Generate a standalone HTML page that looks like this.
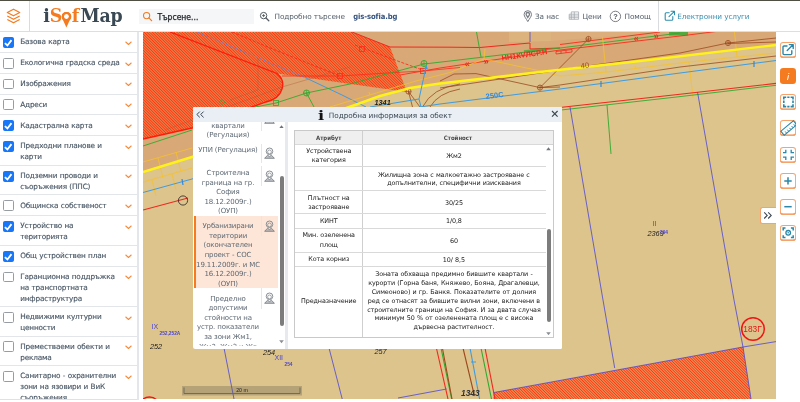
<!DOCTYPE html>
<html lang="bg">
<head>
<meta charset="utf-8">
<title>iSofMap</title>
<style>
*{box-sizing:border-box;margin:0;padding:0}
html,body{width:800px;height:402px;overflow:hidden;background:#fff}
body{position:relative;font-family:"DejaVu Sans","Liberation Sans",sans-serif;font-size:7.5px;color:#4b5763}
#wrap{position:absolute;left:0;top:0;width:800px;height:402px;will-change:transform}
.abs{position:absolute}
#topline{left:0;top:-1px;width:800px;height:2px;background:#4f5043}
#header{left:0;top:1px;width:800px;height:31px;background:#fff;border-bottom:1px solid #dcdfe2}
#hdiv1{left:29px;top:1px;width:1px;height:30px;background:#d9dcdf}
#hdiv2{left:658px;top:1px;width:1px;height:30px;background:#d9dcdf}
.nav{top:10.8px;height:11px;line-height:11px;white-space:nowrap;color:#55606b;font-size:7.3px;letter-spacing:-.1px}
#gis{font-family:"DejaVu Sans Condensed","DejaVu Sans",sans-serif;font-weight:bold;color:#34527f;font-size:7.6px;letter-spacing:-.1px}
#eserv{color:#3a8fb0}
#stext{left:157.5px;top:11px;-webkit-text-stroke:.25px #1f2328;height:12px;line-height:12px;font-family:"DejaVu Sans Condensed","DejaVu Sans",sans-serif;font-size:8.5px;color:#1f2328;white-space:nowrap}
#search{left:139px;top:8.6px;width:115px;height:15.2px;background:#f5f6f7}
#sidebar{left:0;top:32px;width:137px;height:368px;background:#fff;overflow:hidden;border-bottom:1px solid #dfe2e5}
.row{position:absolute;left:0;width:136.5px;border-bottom:1px solid #e3e6e9}
.row .cb{position:absolute;left:3.1px;top:4.8px;width:10.9px;height:10.9px;border:1px solid #989da3;border-radius:1.6px;background:#fff}
.row .cb.on{background:#1877f8;border-color:#1877f8}
.row .cb.on svg{position:absolute;left:-1px;top:-1px;width:10.9px;height:10.9px}
.row .t{position:absolute;left:20.2px;top:4.2px;width:104px;line-height:11px;font-size:7.3px;letter-spacing:-.17px;word-spacing:.3px;color:#4a5866;-webkit-text-stroke:.14px #4a5866;white-space:nowrap}
.row .ch{position:absolute;left:124.5px;top:8.6px;width:7px;height:4.5px}
#sbstrip{left:137px;top:32px;width:2px;height:368px;background:#e3e6ea}
#map{left:143px;top:32px;width:633px;height:367px;overflow:hidden}
#right{left:776px;top:32px;width:24px;height:370px;background:#fff}

#popup{left:192.5px;top:107px;width:369.5px;height:241.5px;background:#fff;overflow:hidden;border-radius:1.5px 1.5px 1.5px 2.5px}
#phead{position:absolute;left:0;top:0;width:100%;height:15px;background:#e9eff4}
#pti{position:absolute;left:124.8px;top:2px;width:8px;height:13px;line-height:13px;font-family:"DejaVu Serif","Liberation Serif",serif;font-weight:bold;font-size:13.5px;transform:scaleX(1.2);color:#111;text-align:center}
#ptitle{position:absolute;left:136.3px;top:3.3px;height:11px;line-height:11px;font-size:7.3px;letter-spacing:-.04px;color:#3a4652;white-space:nowrap}
#plist{position:absolute;left:0;top:15px;width:92.5px;height:226px;overflow:hidden;margin-top:-15px;padding-top:15px}
#plist{top:0;margin-top:0;padding-top:0;height:238.8px;clip-path:inset(15px 0 0 0)}
#psel{position:absolute;left:1px;width:84px;background:#fde6d8;border-left:2.2px solid #f47b20}
.li{position:absolute;left:2px;width:67px;text-align:center;line-height:9.55px;font-size:7px;letter-spacing:-.12px;color:#5d6873;white-space:nowrap}
.isep{position:absolute;left:68.3px;width:1px;background:#e4e7ea}
.pi{position:absolute;left:71.5px;width:11px;height:12px}
.sbt{position:absolute;width:4px;border-radius:2px;background:#7c7c7c}
#psplit{position:absolute;left:92.8px;top:15px;width:2.6px;height:227px;background:#e6eaee}
#ptable{position:absolute;border:1px solid #c9c9c9;overflow:hidden;font-size:6.4px;color:#1a1a1a}
.th{position:absolute;top:0;height:13.8px;line-height:14.2px;background:#efefef;text-align:center;font-weight:bold;font-family:"DejaVu Sans Condensed","DejaVu Sans",sans-serif;font-size:6px;color:#4a4a4a;border-bottom:1px solid #d2d2d2}
.vline{position:absolute;top:0;width:1px;height:100%;background:#cfcfcf}
.hline{position:absolute;left:0;width:250.8px;height:1px;background:#d9d9d9}
.ta,.tv{position:absolute;text-align:center;line-height:8.82px;white-space:nowrap;letter-spacing:-.1px;word-spacing:.3px}
.ta{left:0;line-height:9.45px}

.rb{position:absolute;left:780px;width:16px;height:16px;background:#fff;border-radius:3.2px;box-shadow:inset 0 0 0 .9px #f6a26a,inset 0 -1.5px 0 0 #f48a3c;overflow:visible}
.rb.on{background:#f47b20;box-shadow:none}
.rb svg{position:absolute;left:0;top:0}
#rtab{left:759.5px;top:207.3px;width:16.5px;height:16.8px;background:#fff;border:1px solid #f6a26a;border-right:none;border-radius:2.5px 0 0 2.5px;overflow:hidden}
#rtab svg{position:absolute;left:-.5px;top:-1px}
</style>
</head>

<body>
<div id="wrap">
<div id="topline" class="abs"></div>
<div id="header" class="abs"></div>
<div id="hdiv1" class="abs"></div>
<div id="hdiv2" class="abs"></div>
<svg class="abs" style="left:6px;top:8px" width="16" height="16" viewBox="0 0 16 16"><g fill="none" stroke="#f47b20" stroke-width="1.25" stroke-linejoin="round"><path d="M7.5 1.2 L13.7 4.5 L7.5 7.8 L1.3 4.5 Z"/><path d="M1.3 8 L7.5 11.3 L13.7 8"/><path d="M1.3 11.500 L7.5 14.800 L13.7 11.500"/></g></svg>
<svg class="abs" style="left:40px;top:2px" width="84" height="29" viewBox="0 0 84 29"><g font-family="'DejaVu Serif Condensed','DejaVu Serif',serif" font-weight="bold" font-size="19.3"><text x="3.2" y="20.1" fill="#3a4854">i</text><text x="9.7" y="20.1" fill="#f47b20">S</text><text x="21.1" y="19.1" font-size="16" font-family="'DejaVu Sans',sans-serif" fill="#f47b20">o</text><circle cx="26.4" cy="14.6" r="3.5" fill="none" stroke="#f47b20" stroke-width="2.2"/><path d="M22.3 16.6 L30.5 16.6 L26.4 25.6 Z" fill="#f47b20"/><circle cx="26.4" cy="14.6" r="2.4" fill="#fff"/><text x="31.7" y="20.1" fill="#f47b20">f</text><text x="40.4" y="20.1" fill="#3a4854" letter-spacing="-0.2">Map</text></g></svg>
<div id="search" class="abs"></div>
<svg class="abs" style="left:142px;top:11px" width="11" height="11" viewBox="0 0 11 11"><circle cx="4.6" cy="4.6" r="3.1" fill="none" stroke="#f47b20" stroke-width="1.1"/><path d="M6.9 6.9 L9.6 9.6" stroke="#f47b20" stroke-width="1.3" stroke-linecap="round"/></svg>
<div class="abs" id="stext">Търсене...</div>
<svg class="abs" style="left:259px;top:11px" width="11" height="11" viewBox="0 0 11 11"><circle cx="4.6" cy="4.6" r="3.2" fill="none" stroke="#555b62" stroke-width="1"/><path d="M7 7 L9.8 9.8" stroke="#555b62" stroke-width="1.3" stroke-linecap="round"/><path d="M3.1 4.6 H6.1 M4.6 3.1 V6.1" stroke="#555b62" stroke-width=".9"/></svg>
<div class="abs nav" style="left:274.5px">Подробно търсене</div>
<div class="abs nav" id="gis" style="left:353.3px">gis-sofia.bg</div>
<svg class="abs" style="left:523px;top:10px" width="10" height="13" viewBox="0 0 10 13"><path d="M4.8 11.6 C3.2 8.6 1.1 6.6 1.1 4.4 A3.7 3.7 0 0 1 8.5 4.4 C8.5 6.6 6.4 8.6 4.8 11.6 Z" fill="none" stroke="#777d84" stroke-width="1"/><path d="M4.8 7.4 C4 6 3.1 5.2 3.1 4.2 A1.7 1.7 0 0 1 6.5 4.2 C6.5 5.2 5.6 6 4.8 7.4 Z" fill="none" stroke="#777d84" stroke-width="1.300"/></svg>
<div class="abs nav" style="left:535px">За нас</div>
<svg class="abs" style="left:568px;top:11px" width="12" height="10" viewBox="0 0 12 10"><g fill="none" stroke="#a3a8ae" stroke-width=".8"><path d="M3.3 .9 H10.6 V8.3 H1.2 V3.2 H3.3 Z"/><path d="M3.3 3.2 V8.3 M3.3 3.2 H10.6 M1.2 5 H10.6 M1.2 6.7 H10.6 M6.3 .9 V8.3"/></g></svg>
<div class="abs nav" style="left:582.4px">Цени</div>
<svg class="abs" style="left:609px;top:9.600px" width="13" height="13" viewBox="0 0 13 13"><circle cx="6.4" cy="6.4" r="5.2" fill="none" stroke="#5a6066" stroke-width=".8"/><text x="6.4" y="9" text-anchor="middle" font-family="'Liberation Sans',sans-serif" font-size="7.4" font-weight="bold" fill="#50565d">?</text></svg>
<div class="abs nav" style="left:624.6px">Помощ</div>
<svg class="abs" style="left:664px;top:10px" width="12" height="12" viewBox="0 0 12 12"><g fill="none" stroke="#2f8fae" stroke-width="1.1" stroke-linejoin="round" stroke-linecap="round"><path d="M5.2 2.8 H2.2 Q1.2 2.8 1.2 3.8 V9.2 Q1.2 10.2 2.2 10.2 H7.8 Q8.8 10.2 8.8 9.2 V6.6"/><path d="M5 6.6 L10.4 1.3 M7 1.2 H10.5 V4.7"/></g></svg>
<div class="abs nav" id="eserv" style="left:677.2px">Електронни услуги</div>

<div id="sidebar" class="abs">
<div class="row" style="top:0.10px;height:20.83px"><span class="cb on"><svg viewBox="0 0 10.9 10.9"><path d="M1.9 6.2 L4.4 8.5 L8.5 3.1" fill="none" stroke="#fff" stroke-width="1.8"/></svg></span><span class="t">Базова карта</span><svg class="ch" viewBox="0 0 7 4.5"><path d="M0.8 1 L3.5 3.5 L6.2 1" fill="none" stroke="#f58a3c" stroke-width="1.05" stroke-linecap="round" stroke-linejoin="round"/></svg></div>
<div class="row" style="top:20.93px;height:20.83px"><span class="cb"></span><span class="t">Екологична градска среда</span><svg class="ch" viewBox="0 0 7 4.5"><path d="M0.8 1 L3.5 3.5 L6.2 1" fill="none" stroke="#f58a3c" stroke-width="1.05" stroke-linecap="round" stroke-linejoin="round"/></svg></div>
<div class="row" style="top:41.76px;height:20.83px"><span class="cb"></span><span class="t">Изображения</span><svg class="ch" viewBox="0 0 7 4.5"><path d="M0.8 1 L3.5 3.5 L6.2 1" fill="none" stroke="#f58a3c" stroke-width="1.05" stroke-linecap="round" stroke-linejoin="round"/></svg></div>
<div class="row" style="top:62.59px;height:20.83px"><span class="cb"></span><span class="t">Адреси</span><svg class="ch" viewBox="0 0 7 4.5"><path d="M0.8 1 L3.5 3.5 L6.2 1" fill="none" stroke="#f58a3c" stroke-width="1.05" stroke-linecap="round" stroke-linejoin="round"/></svg></div>
<div class="row" style="top:83.42px;height:20.83px"><span class="cb on"><svg viewBox="0 0 10.9 10.9"><path d="M1.9 6.2 L4.4 8.5 L8.5 3.1" fill="none" stroke="#fff" stroke-width="1.8"/></svg></span><span class="t">Кадастрална карта</span><svg class="ch" viewBox="0 0 7 4.5"><path d="M0.8 1 L3.5 3.5 L6.2 1" fill="none" stroke="#f58a3c" stroke-width="1.05" stroke-linecap="round" stroke-linejoin="round"/></svg></div>
<div class="row" style="top:104.25px;height:29.60px"><span class="cb on"><svg viewBox="0 0 10.9 10.9"><path d="M1.9 6.2 L4.4 8.5 L8.5 3.1" fill="none" stroke="#fff" stroke-width="1.8"/></svg></span><span class="t">Предходни планове и<br>карти</span><svg class="ch" viewBox="0 0 7 4.5"><path d="M0.8 1 L3.5 3.5 L6.2 1" fill="none" stroke="#f58a3c" stroke-width="1.05" stroke-linecap="round" stroke-linejoin="round"/></svg></div>
<div class="row" style="top:133.85px;height:29.60px"><span class="cb on"><svg viewBox="0 0 10.9 10.9"><path d="M1.9 6.2 L4.4 8.5 L8.5 3.1" fill="none" stroke="#fff" stroke-width="1.8"/></svg></span><span class="t">Подземни проводи и<br>съоръжения (ППС)</span><svg class="ch" viewBox="0 0 7 4.5"><path d="M0.8 1 L3.5 3.5 L6.2 1" fill="none" stroke="#f58a3c" stroke-width="1.05" stroke-linecap="round" stroke-linejoin="round"/></svg></div>
<div class="row" style="top:163.45px;height:20.83px"><span class="cb"></span><span class="t">Общинска собственост</span><svg class="ch" viewBox="0 0 7 4.5"><path d="M0.8 1 L3.5 3.5 L6.2 1" fill="none" stroke="#f58a3c" stroke-width="1.05" stroke-linecap="round" stroke-linejoin="round"/></svg></div>
<div class="row" style="top:184.28px;height:29.60px"><span class="cb on"><svg viewBox="0 0 10.9 10.9"><path d="M1.9 6.2 L4.4 8.5 L8.5 3.1" fill="none" stroke="#fff" stroke-width="1.8"/></svg></span><span class="t">Устройство на<br>територията</span><svg class="ch" viewBox="0 0 7 4.5"><path d="M0.8 1 L3.5 3.5 L6.2 1" fill="none" stroke="#f58a3c" stroke-width="1.05" stroke-linecap="round" stroke-linejoin="round"/></svg></div>
<div class="row" style="top:213.88px;height:20.83px"><span class="cb on"><svg viewBox="0 0 10.9 10.9"><path d="M1.9 6.2 L4.4 8.5 L8.5 3.1" fill="none" stroke="#fff" stroke-width="1.8"/></svg></span><span class="t">Общ устройствен план</span><svg class="ch" viewBox="0 0 7 4.5"><path d="M0.8 1 L3.5 3.5 L6.2 1" fill="none" stroke="#f58a3c" stroke-width="1.05" stroke-linecap="round" stroke-linejoin="round"/></svg></div>
<div class="row" style="top:234.71px;height:40.30px"><span class="cb"></span><span class="t">Гаранционна поддръжка<br>на транспортната<br>инфраструктура</span><svg class="ch" viewBox="0 0 7 4.5"><path d="M0.8 1 L3.5 3.5 L6.2 1" fill="none" stroke="#f58a3c" stroke-width="1.05" stroke-linecap="round" stroke-linejoin="round"/></svg></div>
<div class="row" style="top:275.01px;height:29.60px"><span class="cb"></span><span class="t">Недвижими културни<br>ценности</span><svg class="ch" viewBox="0 0 7 4.5"><path d="M0.8 1 L3.5 3.5 L6.2 1" fill="none" stroke="#f58a3c" stroke-width="1.05" stroke-linecap="round" stroke-linejoin="round"/></svg></div>
<div class="row" style="top:304.61px;height:29.60px"><span class="cb"></span><span class="t">Преместваеми обекти и<br>реклама</span><svg class="ch" viewBox="0 0 7 4.5"><path d="M0.8 1 L3.5 3.5 L6.2 1" fill="none" stroke="#f58a3c" stroke-width="1.05" stroke-linecap="round" stroke-linejoin="round"/></svg></div>
<div class="row" style="top:334.21px;height:40.30px"><span class="cb"></span><span class="t">Санитарно - охранителни<br>зони на язовири и ВиК<br>съоръжения</span><svg class="ch" viewBox="0 0 7 4.5"><path d="M0.8 1 L3.5 3.5 L6.2 1" fill="none" stroke="#f58a3c" stroke-width="1.05" stroke-linecap="round" stroke-linejoin="round"/></svg></div>
</div>
<div id="sbstrip" class="abs"></div>
<svg id="map" class="abs" width="633" height="367" viewBox="143 32 633 367">
<defs>
<clipPath id="c1"><path d="M143 32 H352 L390 47 L407 92 L277 73.5 Q285 80 282 89 Q279 99 266 102 L192 128 L143 139 Z"/></clipPath><clipPath id="c2"><path d="M493.5 392.6 L743 347 L751 399 H493.5 Z"/></clipPath>
</defs>
<rect x="143" y="32" width="633" height="367" fill="#ddc38c"/>
<!-- road band above the yellow line -->
<path d="M143 32 H776 V45 L640 61 L540 72 L440 83.500 L410 88 L380 96 L355 105 L300 124 L192 157 L143 172 Z" fill="#d9a877"/>
<!-- light blocks at top -->
<path d="M509 32 H551 V41 L509 42 Z" fill="#dcb37d"/>
<path d="M551 32 H640 V34 L551 41 Z" fill="#dbae7b"/>
<!-- hatched zones -->
<path clip-path="url(#c1)" d="M35.00 32l108 108M36.58 32l108 108M38.16 32l108 108M39.74 32l108 108M41.32 32l108 108M42.90 32l108 108M44.48 32l108 108M46.06 32l108 108M47.64 32l108 108M49.22 32l108 108M50.80 32l108 108M52.38 32l108 108M53.96 32l108 108M55.54 32l108 108M57.12 32l108 108M58.70 32l108 108M60.28 32l108 108M61.86 32l108 108M63.44 32l108 108M65.02 32l108 108M66.60 32l108 108M68.18 32l108 108M69.76 32l108 108M71.34 32l108 108M72.92 32l108 108M74.50 32l108 108M76.08 32l108 108M77.66 32l108 108M79.24 32l108 108M80.82 32l108 108M82.40 32l108 108M83.98 32l108 108M85.56 32l108 108M87.14 32l108 108M88.72 32l108 108M90.30 32l108 108M91.88 32l108 108M93.46 32l108 108M95.04 32l108 108M96.62 32l108 108M98.20 32l108 108M99.78 32l108 108M101.36 32l108 108M102.94 32l108 108M104.52 32l108 108M106.10 32l108 108M107.68 32l108 108M109.26 32l108 108M110.84 32l108 108M112.42 32l108 108M114.00 32l108 108M115.58 32l108 108M117.16 32l108 108M118.74 32l108 108M120.32 32l108 108M121.90 32l108 108M123.48 32l108 108M125.06 32l108 108M126.64 32l108 108M128.22 32l108 108M129.80 32l108 108M131.38 32l108 108M132.96 32l108 108M134.54 32l108 108M136.12 32l108 108M137.70 32l108 108M139.28 32l108 108M140.86 32l108 108M142.44 32l108 108M144.02 32l108 108M145.60 32l108 108M147.18 32l108 108M148.76 32l108 108M150.34 32l108 108M151.92 32l108 108M153.50 32l108 108M155.08 32l108 108M156.66 32l108 108M158.24 32l108 108M159.82 32l108 108M161.40 32l108 108M162.98 32l108 108M164.56 32l108 108M166.14 32l108 108M167.72 32l108 108M169.30 32l108 108M170.88 32l108 108M172.46 32l108 108M174.04 32l108 108M175.62 32l108 108M177.20 32l108 108M178.78 32l108 108M180.36 32l108 108M181.94 32l108 108M183.52 32l108 108M185.10 32l108 108M186.68 32l108 108M188.26 32l108 108M189.84 32l108 108M191.42 32l108 108M193.00 32l108 108M194.58 32l108 108M196.16 32l108 108M197.74 32l108 108M199.32 32l108 108M200.90 32l108 108M202.48 32l108 108M204.06 32l108 108M205.64 32l108 108M207.22 32l108 108M208.80 32l108 108M210.38 32l108 108M211.96 32l108 108M213.54 32l108 108M215.12 32l108 108M216.70 32l108 108M218.28 32l108 108M219.86 32l108 108M221.44 32l108 108M223.02 32l108 108M224.60 32l108 108M226.18 32l108 108M227.76 32l108 108M229.34 32l108 108M230.92 32l108 108M232.50 32l108 108M234.08 32l108 108M235.66 32l108 108M237.24 32l108 108M238.82 32l108 108M240.40 32l108 108M241.98 32l108 108M243.56 32l108 108M245.14 32l108 108M246.72 32l108 108M248.30 32l108 108M249.88 32l108 108M251.46 32l108 108M253.04 32l108 108M254.62 32l108 108M256.20 32l108 108M257.78 32l108 108M259.36 32l108 108M260.94 32l108 108M262.52 32l108 108M264.10 32l108 108M265.68 32l108 108M267.26 32l108 108M268.84 32l108 108M270.42 32l108 108M272.00 32l108 108M273.58 32l108 108M275.16 32l108 108M276.74 32l108 108M278.32 32l108 108M279.90 32l108 108M281.48 32l108 108M283.06 32l108 108M284.64 32l108 108M286.22 32l108 108M287.80 32l108 108M289.38 32l108 108M290.96 32l108 108M292.54 32l108 108M294.12 32l108 108M295.70 32l108 108M297.28 32l108 108M298.86 32l108 108M300.44 32l108 108M302.02 32l108 108M303.60 32l108 108M305.18 32l108 108M306.76 32l108 108M308.34 32l108 108M309.92 32l108 108M311.50 32l108 108M313.08 32l108 108M314.66 32l108 108M316.24 32l108 108M317.82 32l108 108M319.40 32l108 108M320.98 32l108 108M322.56 32l108 108M324.14 32l108 108M325.72 32l108 108M327.30 32l108 108M328.88 32l108 108M330.46 32l108 108M332.04 32l108 108M333.62 32l108 108M335.20 32l108 108M336.78 32l108 108M338.36 32l108 108M339.94 32l108 108M341.52 32l108 108M343.10 32l108 108M344.68 32l108 108M346.26 32l108 108M347.84 32l108 108M349.42 32l108 108M351.00 32l108 108M352.58 32l108 108M354.16 32l108 108M355.74 32l108 108M357.32 32l108 108M358.90 32l108 108M360.48 32l108 108M362.06 32l108 108M363.64 32l108 108M365.22 32l108 108M366.80 32l108 108M368.38 32l108 108M369.96 32l108 108M371.54 32l108 108M373.12 32l108 108M374.70 32l108 108M376.28 32l108 108M377.86 32l108 108M379.44 32l108 108M381.02 32l108 108M382.60 32l108 108M384.18 32l108 108M385.76 32l108 108M387.34 32l108 108M388.92 32l108 108M390.50 32l108 108M392.08 32l108 108M393.66 32l108 108M395.24 32l108 108M396.82 32l108 108M398.40 32l108 108M399.98 32l108 108M401.56 32l108 108M403.14 32l108 108M404.72 32l108 108M406.30 32l108 108M407.88 32l108 108" fill="none" stroke="#ff3608" stroke-width="1"/>
<path clip-path="url(#c2)" d="M439.00 346l54 54M440.58 346l54 54M442.16 346l54 54M443.74 346l54 54M445.32 346l54 54M446.90 346l54 54M448.48 346l54 54M450.06 346l54 54M451.64 346l54 54M453.22 346l54 54M454.80 346l54 54M456.38 346l54 54M457.96 346l54 54M459.54 346l54 54M461.12 346l54 54M462.70 346l54 54M464.28 346l54 54M465.86 346l54 54M467.44 346l54 54M469.02 346l54 54M470.60 346l54 54M472.18 346l54 54M473.76 346l54 54M475.34 346l54 54M476.92 346l54 54M478.50 346l54 54M480.08 346l54 54M481.66 346l54 54M483.24 346l54 54M484.82 346l54 54M486.40 346l54 54M487.98 346l54 54M489.56 346l54 54M491.14 346l54 54M492.72 346l54 54M494.30 346l54 54M495.88 346l54 54M497.46 346l54 54M499.04 346l54 54M500.62 346l54 54M502.20 346l54 54M503.78 346l54 54M505.36 346l54 54M506.94 346l54 54M508.52 346l54 54M510.10 346l54 54M511.68 346l54 54M513.26 346l54 54M514.84 346l54 54M516.42 346l54 54M518.00 346l54 54M519.58 346l54 54M521.16 346l54 54M522.74 346l54 54M524.32 346l54 54M525.90 346l54 54M527.48 346l54 54M529.06 346l54 54M530.64 346l54 54M532.22 346l54 54M533.80 346l54 54M535.38 346l54 54M536.96 346l54 54M538.54 346l54 54M540.12 346l54 54M541.70 346l54 54M543.28 346l54 54M544.86 346l54 54M546.44 346l54 54M548.02 346l54 54M549.60 346l54 54M551.18 346l54 54M552.76 346l54 54M554.34 346l54 54M555.92 346l54 54M557.50 346l54 54M559.08 346l54 54M560.66 346l54 54M562.24 346l54 54M563.82 346l54 54M565.40 346l54 54M566.98 346l54 54M568.56 346l54 54M570.14 346l54 54M571.72 346l54 54M573.30 346l54 54M574.88 346l54 54M576.46 346l54 54M578.04 346l54 54M579.62 346l54 54M581.20 346l54 54M582.78 346l54 54M584.36 346l54 54M585.94 346l54 54M587.52 346l54 54M589.10 346l54 54M590.68 346l54 54M592.26 346l54 54M593.84 346l54 54M595.42 346l54 54M597.00 346l54 54M598.58 346l54 54M600.16 346l54 54M601.74 346l54 54M603.32 346l54 54M604.90 346l54 54M606.48 346l54 54M608.06 346l54 54M609.64 346l54 54M611.22 346l54 54M612.80 346l54 54M614.38 346l54 54M615.96 346l54 54M617.54 346l54 54M619.12 346l54 54M620.70 346l54 54M622.28 346l54 54M623.86 346l54 54M625.44 346l54 54M627.02 346l54 54M628.60 346l54 54M630.18 346l54 54M631.76 346l54 54M633.34 346l54 54M634.92 346l54 54M636.50 346l54 54M638.08 346l54 54M639.66 346l54 54M641.24 346l54 54M642.82 346l54 54M644.40 346l54 54M645.98 346l54 54M647.56 346l54 54M649.14 346l54 54M650.72 346l54 54M652.30 346l54 54M653.88 346l54 54M655.46 346l54 54M657.04 346l54 54M658.62 346l54 54M660.20 346l54 54M661.78 346l54 54M663.36 346l54 54M664.94 346l54 54M666.52 346l54 54M668.10 346l54 54M669.68 346l54 54M671.26 346l54 54M672.84 346l54 54M674.42 346l54 54M676.00 346l54 54M677.58 346l54 54M679.16 346l54 54M680.74 346l54 54M682.32 346l54 54M683.90 346l54 54M685.48 346l54 54M687.06 346l54 54M688.64 346l54 54M690.22 346l54 54M691.80 346l54 54M693.38 346l54 54M694.96 346l54 54M696.54 346l54 54M698.12 346l54 54M699.70 346l54 54M701.28 346l54 54M702.86 346l54 54M704.44 346l54 54M706.02 346l54 54M707.60 346l54 54M709.18 346l54 54M710.76 346l54 54M712.34 346l54 54M713.92 346l54 54M715.50 346l54 54M717.08 346l54 54M718.66 346l54 54M720.24 346l54 54M721.82 346l54 54M723.40 346l54 54M724.98 346l54 54M726.56 346l54 54M728.14 346l54 54M729.72 346l54 54M731.30 346l54 54M732.88 346l54 54M734.46 346l54 54M736.04 346l54 54M737.62 346l54 54M739.20 346l54 54M740.78 346l54 54M742.36 346l54 54M743.94 346l54 54M745.52 346l54 54M747.10 346l54 54M748.68 346l54 54M750.26 346l54 54M751.84 346l54 54" fill="none" stroke="#ff3608" stroke-width="1"/>
<!-- wedge outline -->
<path d="M170 32 L277 73.5 Q285 80 282 89 Q279 99 266 102 L192 128 L143 139" fill="none" stroke="#ff1a0a" stroke-width="1.3"/>
<path d="M352 32 L390 47 L450 47.2 L480 47.5 L530 43 V49 L560 48" fill="none" stroke="#f0281e" stroke-width="1"/>
<!-- faint brown lines inside hatch -->
<path d="M258 58 V90 L230 100 M350 67 L282 87 L165 130" fill="none" stroke="#b0583a" stroke-width=".6" opacity=".7"/>
<!-- dashed red + blue lines in hatch -->
<path d="M232 32 L275 50 L340 76" fill="none" stroke="#ff2010" stroke-width=".8" stroke-dasharray="3 1.5"/>
<path d="M355 45 L395 60 L425 71" fill="none" stroke="#ff2010" stroke-width=".8" stroke-dasharray="3 1.5"/>
<path d="M197 32 L275 65 L305 77.5" fill="none" stroke="#6f7fd0" stroke-width=".9" stroke-dasharray="3 1.5"/>
<path d="M305 77.5 L342 95 L366 107" fill="none" stroke="#3f9be0" stroke-width="1"/>
<!-- red line with squares -->
<path d="M282 76 L340 76 L395 72.5 L423 71 L460 67.5" fill="none" stroke="#ff2a18" stroke-width=".8"/>
<rect x="337.500" y="73.500" width="5" height="5" fill="none" stroke="#ff2a18" stroke-width=".8"/>
<rect x="420.500" y="68.500" width="5" height="5" fill="none" stroke="#ff2a18" stroke-width=".8"/>
<rect x="359.500" y="46.500" width="5" height="5" fill="none" stroke="#ff2a18" stroke-width=".8"/>
<!-- green lines -->
<path d="M143 146 L192 130 M255 107 L276 103 L306.5 93 L350 84 L394 72 L424 64 L450 61 L560 48 L680 33" fill="none" stroke="#2faa2f" stroke-width=".9"/>
<path d="M306.500 93 L314 107 M476.500 32 L481 57 M607 105 L611 154" fill="none" stroke="#2faa2f" stroke-width=".9"/>
<circle cx="306.500" cy="93" r="3" fill="none" stroke="#2faa2f" stroke-width=".9"/>
<circle cx="424" cy="63.500" r="3" fill="none" stroke="#2faa2f" stroke-width=".9"/><path d="M421 63.500 H427 M424 60.500 V66.500 M303.500 93 H309.500 M306.500 90 V96" stroke="#2faa2f" stroke-width=".6"/><path d="M426.300 64.500 L424.300 69 L427.800 69 Z" fill="#3f9be0"/>
<rect x="273.500" y="100.500" width="5" height="5" fill="none" stroke="#2faa2f" stroke-width=".8"/>
<rect x="524" y="49" width="22" height="3" fill="#2faa2f" opacity=".7" transform="rotate(-7 535 50.500)"/><path d="M556 51.500 L572 49.500 M556 54 L572 52 M556 51.500 V54 M572 49.500 V52 M561 51 V53.500 M566 50.300 V52.800" stroke="#f0281e" stroke-width=".8" fill="none"/><path d="M219 102 L222 99.500 L225 102 L222 104.500 Z" fill="none" stroke="#2faa2f" stroke-width=".8"/>
<rect x="669" y="32" width="19" height="3.500" fill="#2faa2f" opacity=".8"/>
<!-- red arrow line -->
<path d="M400 75 L440 68 L560 50 L680 36 L776 24" fill="none" stroke="#ff2a18" stroke-width=".9"/>
<path d="M560 44.500 L660 32" fill="none" stroke="#ff2a18" stroke-width=".9"/>
<!-- thin yellow parcel lines -->
<g fill="none" stroke="#f6c12a" stroke-width=".8">
<path d="M143 162 L192 148 M143 182 L192 168 M158 158 L163 178 M176 152 L181 172 M152 180 L156 196 M172 174 L176 190"/>
<path d="M330 107 L416 81 L450 72.500 L484 59 L485 49 M369 92 L370 95 M484 59 L536 70 L560 76 L607 72 L680 63 L776 53"/>
<path d="M602.500 37 L606 72 M734.500 32 L737 57 M689 62 L693 98 M635 66 L636 69"/>
</g>
<!-- brown sewer lines -->
<g fill="none" stroke="#9c4a1e" stroke-width=".8">
<path d="M440 81 L454 74 L476 73.600 L540 87.600 L560 87 M540 87.600 L588.500 39 M440 88 L483 81.600 L580 67 L680 53 L728 43 L776 38 M728 43.500 L776 42"/>
<path d="M540 87.600 L560 85 L680 67 L776 56"/>
<path d="M408.500 91.500 L412.500 107 M408.500 91.500 L420 107 M460 84 Q432 88 422.500 107 M460 89 Q438 93 430 107"/>
<circle cx="540" cy="87.600" r="2.600"/><circle cx="588.500" cy="39" r="2.600"/><circle cx="728" cy="43" r="2.600"/><circle cx="408.500" cy="91.500" r="2.600"/><path d="M537.400 87.600 H542.600 M540 85 V90.200 M585.900 39 H591.100 M588.500 36.400 V41.600 M725.400 43 H730.600 M728 40.400 V45.600 M405.900 91.500 H411.100 M408.500 88.900 V94.100" stroke-width=".6"/>
</g>
<!-- yellow thick -->
<path d="M143 172 L192 157 L300 124 L355 105 L380 96 L410 88 L440 83.500 L540 72 L640 61 L776 45" fill="none" stroke="#fff21a" stroke-width="2.400"/>
<!-- blue water line -->
<path d="M143 192.500 L192 179 L300 143 L420 107 L440 104 L560 89 L680 73 L776 60.500" fill="none" stroke="#3f9be0" stroke-width="1"/>
<path d="M182 179 L183 185 M601 81 V87 M754 61 V67" stroke="#2f8ae0" stroke-width="1.200"/>
<path d="M370 107 L419 99 L426 67 M419 99 L421 107" fill="none" stroke="#3f9be0" stroke-width="1"/>
<!-- lower red + green -->
<path d="M143 210 L188 198 M562 107.300 L680 94.300 L776 83.400" fill="none" stroke="#f0281e" stroke-width="1.100"/>
<path d="M562 109.900 L680 96.600 L776 85.300" fill="none" stroke="#2faa2f" stroke-width=".9"/>
<circle cx="183" cy="200.500" r="4.600" fill="none" stroke="#222" stroke-width=".8"/>
<!-- purple parcel lines -->
<g fill="none" stroke="#4a46d6" stroke-width=".8">
<path d="M570 107 L603 300 L614.700 368 M697.500 92 L734 300 L743 347 L751 399 M743 347 L776 341.600 M398 398 L446.600 389 M493.500 392.600 L743 347 M224 348 L234 399 M329 348 L343 402 M530 32 V42"/>
</g>
<!-- bottom corridor -->
<g fill="none" stroke-width="1.100">
<path d="M436.400 348 L448 399 M485 348 L495 399" stroke="#f0281e"/>
<path d="M441 348 L451.700 399 M481 348 L491.500 399" stroke="#2faa2f"/>
<path d="M463 348 L474.500 396 M442.400 348 L452 399" stroke="#9c4a1e"/>
<path d="M470 348 L479.600 399 M471 362 H476" stroke="#3f9be0"/>
</g>
<!-- circles -->
<circle cx="753" cy="329" r="11.300" fill="none" stroke="#f01414" stroke-width="1.500"/>
<circle cx="149.500" cy="407.500" r="10.500" fill="none" stroke="#f01414" stroke-width="1.400"/>
<!-- scale bar -->
<rect x="182" y="386" width="120" height="9.500" fill="#6b6550" opacity=".35"/>
<path d="M184 387.500 V393.500 H300 V387.500" fill="none" stroke="#6a6756" stroke-width=".9"/>
<g font-family="'Liberation Sans',sans-serif">
<text x="242" y="392" font-size="5.200" text-anchor="middle" fill="#222">20 m</text>
<text x="743.300" y="332" font-size="8.300" fill="#e81414">183Г</text>
<g font-style="italic" fill="#1c1c1c" font-size="7.300">
<text x="150" y="349">252</text><text x="263" y="354.500">254</text><text x="374.500" y="354">257</text><text x="461" y="396" font-size="8.400" font-weight="bold" fill="#333">1343</text><text x="374.500" y="104.600" font-weight="bold">1341</text><text x="647.500" y="236">2369</text>
</g>
<g fill="#4a46d6">
<text x="151.500" y="328.500" font-size="7">IX</text><text x="159.500" y="335" font-size="4.800" font-weight="bold">252,252A</text><text x="274.500" y="360" font-size="7">XII</text><text x="284.500" y="366" font-size="4.800" font-weight="bold">254</text><text x="652.700" y="226" font-size="6.800">II</text><text x="660" y="233.500" font-size="4.800" font-weight="bold">394</text>
</g>
<text x="486" y="99" font-size="7.500" font-weight="bold" fill="#2f8ae0" transform="rotate(-7 486 99)">250С</text>
<text x="581" y="68.500" font-size="7.500" fill="#9c4a1e" transform="rotate(-7 581 68.500)">40</text>
<text x="502" y="60.500" font-size="7.400" font-weight="bold" fill="#f0281e" transform="rotate(-8 502 60.500)">НН1КVЛСР.Н</text>
<text x="465" y="67" font-size="9" font-weight="bold" fill="#f0281e" transform="rotate(-8 465 67)">«</text><text x="484" y="64.500" font-size="9" font-weight="bold" fill="#f0281e" transform="rotate(-8 484 64.500)">»</text>
<text x="634" y="41.500" font-size="9" font-weight="bold" fill="#f0281e" transform="rotate(-7 634 41.500)">«</text><text x="654" y="39" font-size="9" font-weight="bold" fill="#f0281e" transform="rotate(-7 654 39)">»</text>
</g>
</svg>

<div id="popup" class="abs">
<div id="phead"></div>
<svg class="abs" style="left:3.600px;top:3.800px" width="9" height="7" viewBox="0 0 9 7"><path d="M3.800 .600 L.900 3.500 L3.800 6.400 M7.600 .600 L4.700 3.500 L7.600 6.400" fill="none" stroke="#3a4652" stroke-width="1"/></svg>
<div id="pti">i</div><div id="ptitle">Подробна информация за обект</div>
<svg class="abs" style="left:358px;top:3px" width="8" height="8" viewBox="0 0 8 8"><path d="M1 1 L6.600 6.600 M6.600 1 L1 6.600" fill="none" stroke="#3f4850" stroke-width="1.150"/></svg>
<div id="plist">
<div id="psel" style="top:108.50px;height:72px"></div>
<div class="li " style="top:14.92px">квартали<br>(Регулация)</div>
<div class="li " style="top:39.22px">УПИ (Регулация)</div>
<div class="li " style="top:62.03px">Строителна<br>граница на гр.<br>София<br>18.12.2009г.)<br>(ОУП)</div>
<div class="li " style="top:115.32px">Урбанизирани<br>територии<br>(окончателен<br>проект - СОС<br>19.11.2009г. и МС<br>16.12.2009г.)<br>(ОУП)</div>
<div class="li " style="top:187.83px">Пределно<br>допустими<br>стойности на<br>устр. показатели<br>за зони Жм1,<br>Жм2, Жм3 и Жв</div>
<div class="isep" style="top:0.00px;height:24.00px"></div>
<div class="isep" style="top:36.50px;height:19.50px"></div>
<svg class="pi" style="top:40.30px" viewBox="0 0 11 12"><g fill="none" stroke="#7d8389" stroke-width=".9"><circle cx="5.5" cy="4.3" r="3.3"/><circle cx="5.5" cy="4.9" r="1.9" stroke-width=".7"/><path d="M.6 11.3 L3.6 8.2 L5.5 9.6 L7.4 8.2 L10.4 11.3 Z" fill="#8d9298" fill-opacity=".55"/></g></svg>
<div class="isep" style="top:59.00px;height:20.00px"></div>
<svg class="pi" style="top:62.80px" viewBox="0 0 11 12"><g fill="none" stroke="#7d8389" stroke-width=".9"><circle cx="5.5" cy="4.3" r="3.3"/><circle cx="5.5" cy="4.9" r="1.9" stroke-width=".7"/><path d="M.6 11.3 L3.6 8.2 L5.5 9.6 L7.4 8.2 L10.4 11.3 Z" fill="#8d9298" fill-opacity=".55"/></g></svg>
<div class="isep" style="top:108.50px;height:20.50px"></div>
<svg class="pi" style="top:112.50px" viewBox="0 0 11 12"><g fill="none" stroke="#7d8389" stroke-width=".9"><circle cx="5.5" cy="4.3" r="3.3"/><circle cx="5.5" cy="4.9" r="1.9" stroke-width=".7"/><path d="M.6 11.3 L3.6 8.2 L5.5 9.6 L7.4 8.2 L10.4 11.3 Z" fill="#8d9298" fill-opacity=".55"/></g></svg>
<div class="isep" style="top:180.50px;height:21.50px"></div>
<svg class="pi" style="top:184.50px" viewBox="0 0 11 12"><g fill="none" stroke="#7d8389" stroke-width=".9"><circle cx="5.5" cy="4.3" r="3.3"/><circle cx="5.5" cy="4.9" r="1.9" stroke-width=".7"/><path d="M.6 11.3 L3.6 8.2 L5.5 9.6 L7.4 8.2 L10.4 11.3 Z" fill="#8d9298" fill-opacity=".55"/></g></svg>
<svg class="pi" style="top:5.00px" viewBox="0 0 11 12"><g fill="none" stroke="#7d8389" stroke-width=".9"><circle cx="5.5" cy="4.3" r="3.3"/><circle cx="5.5" cy="4.9" r="1.9" stroke-width=".7"/><path d="M.6 11.3 L3.6 8.2 L5.5 9.6 L7.4 8.2 L10.4 11.3 Z" fill="#8d9298" fill-opacity=".55"/></g></svg>
</div>
<div class="sbt" style="left:87.300px;top:69px;height:150px"></div>
<svg class="abs" style="left:86.800px;top:17.500px" width="5" height="3.500" viewBox="0 0 5 3.500"><path d="M2.500 .300 L4.800 3.200 H.2 Z" fill="#6f747a"/></svg>
<svg class="abs" style="left:86.800px;top:233.200px" width="5" height="3.500" viewBox="0 0 5 3.500"><path d="M2.500 3.200 L4.800 .300 H.2 Z" fill="#8a8f95"/></svg>
<div id="psplit"></div>
<div id="ptable" style="left:101.50px;top:23.30px;width:259.50px;height:207.90px">
<div class="th" style="left:0;width:67.50px">Атрибут</div><div class="th" style="left:67.50px;width:191.00px">Стойност</div>
<div class="vline" style="left:67.00px"></div>
<div class="hline" style="top:13.00px"></div>
<div class="ta" style="top:15.65px;width:67.50px">Устройствена<br>категория</div>
<div class="tv" style="top:20.69px;left:67.50px;width:182.80px">Жм2</div>
<div class="hline" style="top:34.80px"></div>
<div class="tv" style="top:39.38px;left:67.50px;width:182.80px">Жилищна зона с малкоетажно застрояване с<br>допълнителни, специфични изисквания</div>
<div class="hline" style="top:59.20px"></div>
<div class="ta" style="top:62.45px;width:67.50px">Плътност на<br>застрояване</div>
<div class="tv" style="top:67.49px;left:67.50px;width:182.80px">30/25</div>
<div class="hline" style="top:82.20px"></div>
<div class="ta" style="top:85.73px;width:67.50px">КИНТ</div>
<div class="tv" style="top:86.04px;left:67.50px;width:182.80px">1/0,8</div>
<div class="hline" style="top:96.30px"></div>
<div class="ta" style="top:100.20px;width:67.50px">Мин. озеленена<br>площ</div>
<div class="tv" style="top:105.24px;left:67.50px;width:182.80px">60</div>
<div class="hline" style="top:120.60px"></div>
<div class="ta" style="top:124.07px;width:67.50px">Кота корниз</div>
<div class="tv" style="top:124.39px;left:67.50px;width:182.80px">10/ 8,5</div>
<div class="hline" style="top:134.60px"></div>
<div class="ta" style="top:165.22px;width:67.50px">Предназначение</div>
<div class="tv" style="top:139.08px;left:67.50px;width:182.80px">Зоната обхваща предимно бившите квартали -<br>курорти (Горна баня, Княжево, Бояна, Драгалевци,<br>Симеоново) и гр. Банкя. Показателите от долния<br>ред се отнасят за бившите вилни зони, включени в<br>строителните граници на София. И за двата случая<br>минимум 50 % от озеленената площ е с висока<br>дървесна растителност.</div>
</div>
<div class="sbt" style="left:354.300px;top:121.500px;height:93px"></div>
<svg class="abs" style="left:353.800px;top:40px" width="5" height="3.500" viewBox="0 0 5 3.500"><path d="M2.500 .300 L4.800 3.200 H.2 Z" fill="#6f747a"/></svg>
<svg class="abs" style="left:353.800px;top:224.500px" width="5" height="3.500" viewBox="0 0 5 3.500"><path d="M2.500 3.200 L4.800 .300 H.2 Z" fill="#8a8f95"/></svg>
</div>

<div id="right" class="abs"></div>
<div class="rb" style="top:42.30px"><svg width="16" height="16" viewBox="0 0 16 16"><g fill="none" stroke="#2b87a8" stroke-width="1.400" stroke-linejoin="round" stroke-linecap="round"><path d="M7 4 H4 Q3 4 3 5 V11.600 Q3 12.600 4 12.600 H10.800 Q11.800 12.600 11.800 11.600 V8.800"/><path d="M7.200 8.500 L13 2.800 M9.300 2.600 H13.200 V6.500"/></g></svg></div>
<div class="rb on" style="top:68.36px"><svg width="16" height="16" viewBox="0 0 16 16"><text x="8" y="11.600" text-anchor="middle" font-family="'DejaVu Sans',sans-serif" font-style="italic" font-size="9.500" fill="#fff">i</text></svg></div>
<div class="rb" style="top:94.42px"><svg width="16" height="16" viewBox="0 0 16 16"><path d="M3.800 5.400 V3.200 H6.200 M7.300 3.200 H9.500 M10.600 3.200 H13 V5.400 M13 6.600 V9 M13 10.200 V12.600 H10.600 M9.500 12.600 H7.300 M6.200 12.600 H3.800 V10.200 M3.800 9 V6.600" fill="none" stroke="#2b87a8" stroke-width="1.600"/></svg></div>
<div class="rb" style="top:120.48px"><svg width="16" height="16" viewBox="0 0 16 16"><g fill="none" stroke="#2b87a8" stroke-width="1.100" transform="rotate(-40 8.800 8)"><rect x=".600" y="5.400" width="16.400" height="5.200"/><path d="M3.800 10.600 V8.300 M6.600 10.600 V8.300 M9.400 10.600 V8.300 M12.200 10.600 V8.300 M15 10.600 V8.300" stroke-width=".9"/></g></svg></div>
<div class="rb" style="top:146.54px"><svg width="16" height="16" viewBox="0 0 16 16"><g fill="none" stroke="#2b87a8" stroke-width="1.300"><path d="M3 5.600 H5.800 V2.800 M11.200 2.800 V5.600 H14 M14 10.200 H11.200 V13 M5.800 13 V10.200 H3"/></g></svg></div>
<div class="rb" style="top:172.60px"><svg width="16" height="16" viewBox="0 0 16 16"><path d="M4.300 7.900 H11.700 M8 4.200 V11.600" fill="none" stroke="#2b87a8" stroke-width="1.500"/></svg></div>
<div class="rb" style="top:198.66px"><svg width="16" height="16" viewBox="0 0 16 16"><path d="M4.300 7.700 H11.700" fill="none" stroke="#2b87a8" stroke-width="1.500"/></svg></div>
<div class="rb" style="top:224.72px"><svg width="16" height="16" viewBox="0 0 16 16"><g fill="none" stroke="#2b87a8" stroke-width="1.500"><path d="M3.200 5.400 V3.100 H5.500 M10.900 3.100 H13.200 V5.400 M13.200 10.300 V12.600 H10.900 M5.500 12.600 H3.200 V10.300"/><circle cx="8.200" cy="7.800" r="2.300" stroke-width="1.300"/></g><circle cx="8.200" cy="7.800" r=".8" fill="#2b87a8"/></svg></div>
<div id="rtab" class="abs"><svg width="16" height="17" viewBox="0 0 16 17"><path d="M4.200 5.300 L7.200 8.400 L4.200 11.500 M8.200 5.300 L11.200 8.400 L8.200 11.500" fill="none" stroke="#3a4652" stroke-width="1.100"/></svg></div>

</div>
</body>
</html>
